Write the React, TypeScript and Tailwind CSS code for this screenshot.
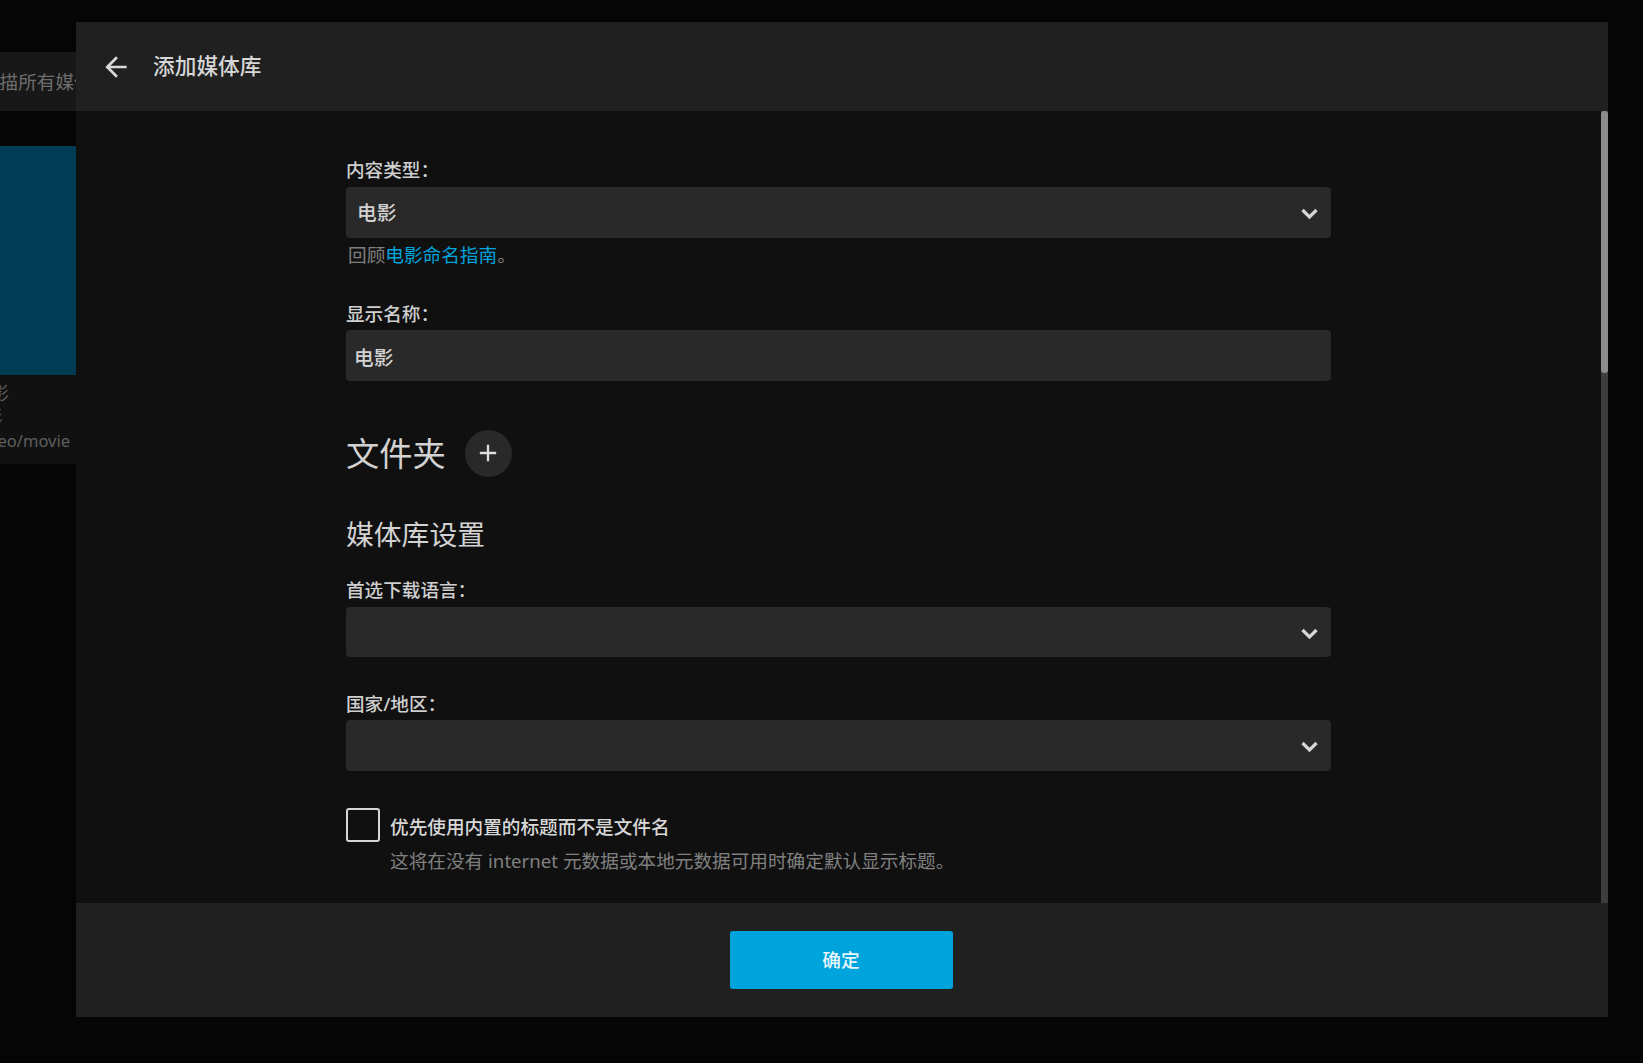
import React from 'react';

const fontStack = '[font-family:"Noto_Sans","Noto_Sans_CJK_SC",sans-serif]';

function Chevron() {
  return (
    <svg viewBox="0 0 17 12" className="mt-[3px] h-[12px] w-[17px]" fill="none">
      <path d="M1.5 2 L8.5 9 L15.5 2" stroke="#d6d6d6" strokeWidth="3.2" />
    </svg>
  );
}

function FieldLabel({ children }: { children: React.ReactNode }) {
  return <div className="h-[26px] text-[18.6px] leading-[26px] font-medium text-[#cfcfcf]">{children}</div>;
}

function SelectBox({ value, height = 'h-[51px]' }: { value?: string; height?: string }) {
  return (
    <div className={`flex ${height} items-center justify-between rounded-[4px] bg-[#292929] pr-[13px] pl-[11px]`}>
      <span className="text-[19.7px] font-medium text-[#d2d2d2]">{value}</span>
      <Chevron />
    </div>
  );
}

export default function App() {
  return (
    <div className={`relative h-[1063px] w-[1643px] overflow-hidden bg-[#050505] ${fontStack}`}>
      {/* dimmed page behind the dialog */}
      <div className="absolute top-[52px] left-0 flex h-[59px] w-[76px] items-center overflow-hidden bg-[#181818]">
        <span className="ml-[-19px] pt-[1px] text-[18.6px] whitespace-nowrap text-[#6e6e6e]">扫描所有媒体库</span>
      </div>
      <div className="absolute top-[146px] left-0 h-[318px] w-[76px] overflow-hidden bg-[#111111]">
        <div className="h-[229px] bg-[#003d54]" />
        <div className="pt-[6px] text-[18.4px] leading-[24px] whitespace-nowrap text-[#5f5f5f]">
          <div className="flex w-[9px] justify-end">电影</div>
          <div className="flex w-[3px] justify-end text-[#4a4a4a]">电影</div>
          <div className="flex w-[70px] justify-end text-[16.5px]">/video/movie</div>
        </div>
      </div>

      {/* dialog */}
      <div className="absolute top-[22px] left-[76px] flex h-[995px] w-[1532px] flex-col bg-[#101010]">
        <div className="flex h-[89px] shrink-0 items-center bg-[#202020] pl-[24px]">
          <svg viewBox="0 0 24 24" className="h-[32px] w-[32px]" fill="#d9d9d9">
            <path d="M20 11H7.83l5.59-5.59L12 4l-8 8 8 8 1.41-1.41L7.83 13H20v-2z" />
          </svg>
          <span className="ml-[21px] text-[21.7px] font-medium text-[#d6d6d6]">添加媒体库</span>
        </div>

        <div className="flex min-h-0 flex-1">
          <div className="flex-1 overflow-hidden">
            <div className="mx-auto w-[985px] pt-[46px]">
              <FieldLabel>内容类型：</FieldLabel>
              <div className="mt-[4px]">
                <SelectBox value="电影" />
              </div>
              <div className="mt-[4px] pl-[2px] text-[18.65px] leading-[26px] text-[#808080]">
                回顾<span className="text-[#00a4dc]">电影命名指南</span>。
              </div>

              <div className="mt-[33px]">
                <FieldLabel>显示名称：</FieldLabel>
              </div>
              <div className="mt-[3px] flex h-[51px] items-center rounded-[4px] bg-[#292929] pt-[4px] pl-[8px] text-[19.7px] font-medium text-[#d2d2d2]">
                电影
              </div>

              <div className="mt-[48px] flex h-[48px] items-center">
                <span className="text-[33.3px] leading-[48px] text-[#d2d2d2]">文件夹</span>
                <div className="ml-[19px] flex h-[47px] w-[47px] items-center justify-center rounded-full bg-[#292929]">
                  <svg viewBox="0 0 24 24" className="h-[28px] w-[28px]" fill="#dddddd">
                    <path d="M19 13h-6v6h-2v-6H5v-2h6V5h2v6h6v2z" />
                  </svg>
                </div>
              </div>

              <div className="mt-[37px] text-[27.8px] leading-[40px] text-[#d2d2d2]">媒体库设置</div>

              <div className="mt-[23px]">
                <FieldLabel>首选下载语言：</FieldLabel>
              </div>
              <div className="mt-[4px]">
                <SelectBox height="h-[50px]" />
              </div>

              <div className="mt-[34px]">
                <FieldLabel>国家/地区：</FieldLabel>
              </div>
              <div className="mt-[3px]">
                <SelectBox />
              </div>

              <div className="mt-[37px] flex">
                <div className="h-[34px] w-[34px] shrink-0 rounded-[3px] border-2 border-[#d6d6d6]" />
                <div className="ml-[10px] pt-[6px]">
                  <div className="text-[18.65px] leading-[26px] font-medium text-[#d8d8d8]">优先使用内置的标题而不是文件名</div>
                  <div className="mt-[8px] text-[18.65px] leading-[26px] text-[#808080]">
                    这将在没有 internet 元数据或本地元数据可用时确定默认显示标题。
                  </div>
                </div>
              </div>
            </div>
          </div>
          {/* scrollbar */}
          <div className="w-[7px] shrink-0 bg-[#3d3d3d]">
            <div className="h-[262px] rounded-[3px] bg-[#8c8c8c]" />
          </div>
        </div>

        <div className="flex h-[114px] shrink-0 justify-center bg-[#202020] pt-[28px] pr-[2px]">
          <div className="flex h-[58px] w-[223px] items-center justify-center rounded-[3px] bg-[#00a4dc] text-[18.65px] font-medium text-[#e8f6fb]">
            确定
          </div>
        </div>
      </div>
    </div>
  );
}
